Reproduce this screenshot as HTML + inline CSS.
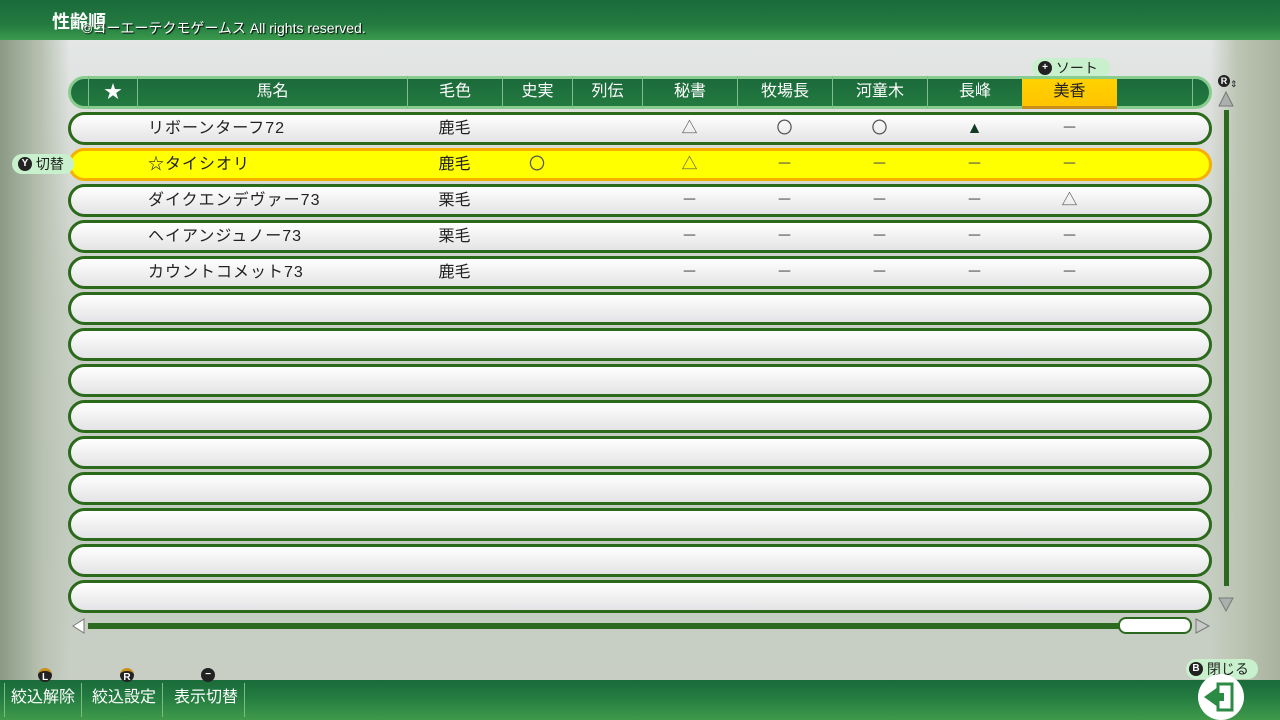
<!DOCTYPE html><html><head><meta charset="utf-8"><style>
*{margin:0;padding:0;box-sizing:border-box}
body{width:1280px;height:720px;overflow:hidden;position:relative;font-family:"Liberation Sans","Noto Sans CJK JP",sans-serif;
background:linear-gradient(180deg,#e4e7e6 40px,#dcdfdc 120px,#c9d0c5 300px,#c3ccc0 500px,#c8cec4 680px);}
.bgl{position:absolute;left:0;top:40px;width:70px;height:640px;background:linear-gradient(90deg,#8a9a84,#b8c2b2 60%,rgba(200,206,196,0));}
.bgr{position:absolute;right:0;top:40px;width:70px;height:640px;background:linear-gradient(270deg,#a8b29e,#bcc4b3 60%,rgba(200,206,196,0));}
.top{position:absolute;left:0;top:0;width:1280px;height:40px;background:linear-gradient(180deg,#1a6b3a,#237a40 60%,#3a9a4c);}
.top .t{position:absolute;left:52px;top:8px;color:#fff;font-size:18px;font-weight:bold}
.top .c{position:absolute;left:82px;top:18px;color:#fff;font-size:14px;text-shadow:1px 1px 1px #000;white-space:nowrap}
.bot{position:absolute;left:0;top:680px;width:1280px;height:40px;background:linear-gradient(180deg,#1a6b3a,#237a40 40%,#3f9a4a);}
.bb{position:absolute;top:683px;height:34px;color:#fff;font-size:16px;line-height:30px;padding:0 6px;border-left:1px solid #7dbb82;border-right:1px solid #7dbb82;white-space:nowrap}
.hdr{position:absolute;left:68px;top:76px;width:1144px;height:33px;border-radius:17px;background:linear-gradient(180deg,#1b6a3b,#237a3f);border:3px solid #88cc90;}
.h{position:absolute;top:76px;height:33px;line-height:32px;color:#fff;font-size:16px;text-align:center;border-left:1px solid #7ec08a;white-space:nowrap}
.row{position:absolute;left:68px;width:1144px;height:33px;border-radius:17px;border:3px solid #2a6a1a;background:linear-gradient(180deg,#fff,#eeeeef 60%,#e4e4e6);}
.row.y{border-color:#f5b000;background:#ffff00}
.cell{position:absolute;font-size:16px;color:#222;line-height:33px;text-align:center;white-space:nowrap}
.s{font-size:16px;color:#555}
.nm{position:absolute;left:148px;font-size:16px;color:#222;line-height:33px;white-space:nowrap;letter-spacing:1px}
.pill{position:absolute;background:#c8f0cc;border-radius:10px;font-size:14px;color:#222;height:20px;line-height:20px;white-space:nowrap}
.btn{display:inline-block;width:14px;height:14px;border-radius:7px;background:#222;color:#fff;font-size:10px;line-height:14px;text-align:center;font-weight:bold;vertical-align:middle;margin-top:-3px}
</style></head><body>
<div class="bgl"></div><div class="bgr"></div>
<div class="top"><span class="t">性齢順</span><span class="c">©コーエーテクモゲームス All rights reserved.</span></div>

<div class="pill" style="left:1032px;top:58px;width:78px;padding-left:6px"><span class="btn">+</span> ソート</div>
<div class="hdr"></div>
<div style="position:absolute;left:1022px;top:79px;width:95px;height:30px;background:linear-gradient(180deg,#ffd200,#ffc400);border-bottom:3px solid #c8901a"></div>
<div class="h" style="left:88px;width:49px;font-size:18px">★</div>
<div class="h" style="left:137px;width:270px">馬名</div>
<div class="h" style="left:407px;width:95px">毛色</div>
<div class="h" style="left:502px;width:70px">史実</div>
<div class="h" style="left:572px;width:70px">列伝</div>
<div class="h" style="left:642px;width:95px">秘書</div>
<div class="h" style="left:737px;width:95px">牧場長</div>
<div class="h" style="left:832px;width:95px">河童木</div>
<div class="h" style="left:927px;width:95px">長峰</div>
<div class="h" style="left:1022px;width:95px;color:#222;border:none">美香</div>
<div class="h" style="left:1192px;width:1px;height:27px;top:79px"></div>

<div class="row" style="top:112px"></div>
<div class="row y" style="top:148px"></div>
<div class="row" style="top:184px"></div>
<div class="row" style="top:220px"></div>
<div class="row" style="top:256px"></div>
<div class="row" style="top:292px"></div>
<div class="row" style="top:328px"></div>
<div class="row" style="top:364px"></div>
<div class="row" style="top:400px"></div>
<div class="row" style="top:436px"></div>
<div class="row" style="top:472px"></div>
<div class="row" style="top:508px"></div>
<div class="row" style="top:544px"></div>
<div class="row" style="top:580px"></div>

<div class="pill" style="left:12px;top:154px;width:62px;padding-left:6px"><span class="btn">Y</span> 切替</div>

<div style="position:absolute;top:112px;left:0;width:1280px">
<span class="nm" style="top:0">リボーンターフ72</span><span class="cell" style="left:407px;width:95px;top:0">鹿毛</span>
<span class="cell s" style="left:642px;width:95px;top:0">△</span><span class="cell s" style="left:737px;width:95px;top:0">〇</span><span class="cell s" style="left:832px;width:95px;top:0">〇</span><span class="cell s" style="left:927px;width:95px;top:0;color:#113a22">▲</span><span class="cell s" style="left:1022px;width:95px;top:0">－</span>

<span class="nm" style="top:36px">☆タイシオリ</span><span class="cell" style="left:407px;width:95px;top:36px">鹿毛</span><span class="cell s" style="left:502px;width:70px;top:36px">〇</span>
<span class="cell s" style="left:642px;width:95px;top:36px">△</span><span class="cell s" style="left:737px;width:95px;top:36px">－</span><span class="cell s" style="left:832px;width:95px;top:36px">－</span><span class="cell s" style="left:927px;width:95px;top:36px">－</span><span class="cell s" style="left:1022px;width:95px;top:36px">－</span>

<span class="nm" style="top:72px">ダイクエンデヴァー73</span><span class="cell" style="left:407px;width:95px;top:72px">栗毛</span>
<span class="cell s" style="left:642px;width:95px;top:72px">－</span><span class="cell s" style="left:737px;width:95px;top:72px">－</span><span class="cell s" style="left:832px;width:95px;top:72px">－</span><span class="cell s" style="left:927px;width:95px;top:72px">－</span><span class="cell s" style="left:1022px;width:95px;top:72px">△</span>

<span class="nm" style="top:108px">ヘイアンジュノー73</span><span class="cell" style="left:407px;width:95px;top:108px">栗毛</span>
<span class="cell s" style="left:642px;width:95px;top:108px">－</span><span class="cell s" style="left:737px;width:95px;top:108px">－</span><span class="cell s" style="left:832px;width:95px;top:108px">－</span><span class="cell s" style="left:927px;width:95px;top:108px">－</span><span class="cell s" style="left:1022px;width:95px;top:108px">－</span>

<span class="nm" style="top:144px">カウントコメット73</span><span class="cell" style="left:407px;width:95px;top:144px">鹿毛</span>
<span class="cell s" style="left:642px;width:95px;top:144px">－</span><span class="cell s" style="left:737px;width:95px;top:144px">－</span><span class="cell s" style="left:832px;width:95px;top:144px">－</span><span class="cell s" style="left:927px;width:95px;top:144px">－</span><span class="cell s" style="left:1022px;width:95px;top:144px">－</span>
</div>

<div style="position:absolute;left:1218px;top:74px;white-space:nowrap"><span class="btn" style="width:12px;height:12px;font-size:9px;line-height:12px">R</span><span style="font-size:9px;color:#222">⇕</span></div>
<svg style="position:absolute;left:1216px;top:90px" width="20" height="525"><polygon points="10,2 3,16 17,16" fill="#aab0ad" stroke="#777" stroke-width="1"/><rect x="8" y="20" width="5" height="476" fill="#2b6a1e"/><polygon points="3,508 17,508 10,521" fill="#aab0ad" stroke="#777"/></svg>
<svg style="position:absolute;left:70px;top:616px" width="1145" height="20"><polygon points="3,10 14,3 14,17" fill="#fff" stroke="#777"/><rect x="18" y="7" width="1035" height="6" fill="#2b6a1e"/><rect x="1049" y="2" width="72" height="15" rx="7" fill="#fff" stroke="#2b6a1e" stroke-width="2"/><polygon points="1126,3 1139,10 1126,17" fill="#c8ccc8" stroke="#777"/></svg>

<div class="bot"></div>
<div class="bb" style="left:4px">絞込解除</div>
<div class="bb" style="left:86px;border-left:none">絞込設定</div>
<div class="bb" style="left:168px;border-left:none">表示切替</div>
<span class="btn" style="position:absolute;left:38px;top:668px;border-top:3px solid #c8901a;margin:0">L</span>
<span class="btn" style="position:absolute;left:120px;top:668px;border-top:3px solid #c8901a;margin:0">R</span>
<span class="btn" style="position:absolute;left:201px;top:668px;margin:0">−</span>
<div class="pill" style="left:1186px;top:659px;width:72px;padding-left:3px"><span class="btn">B</span> 閉じる</div>
<svg style="position:absolute;left:1198px;top:674px" width="48" height="46"><circle cx="23" cy="23" r="23" fill="#fff"/><rect x="20" y="10" width="14" height="26" fill="none" stroke="#2b8a44" stroke-width="3"/><polygon points="6,23 20,13 20,33" fill="#2b8a44"/><rect x="18" y="19" width="8" height="8" fill="#2b8a44"/></svg>
</body></html>
